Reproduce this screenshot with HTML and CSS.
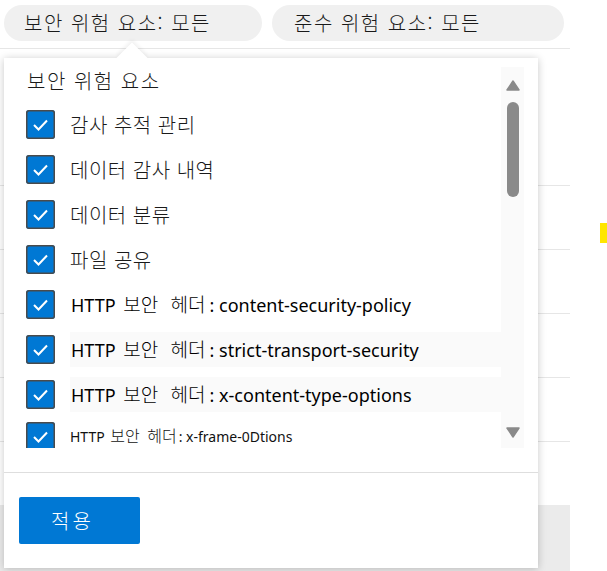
FILE: index.html
```html
<!DOCTYPE html>
<html lang="ko">
<head>
<meta charset="utf-8">
<title>보안 위험 요소</title>
<link rel="stylesheet" href="styles.css">
</head>
<body>
<div class="page">
  <div class="filters">
    <div class="pill">보안 위험 요소: 모든</div>
    <div class="pill pill-wide">준수 위험 요소: 모든</div>
  </div>
  <div class="table">
    <div class="trow trow-first"></div>
    <div class="trow"></div>
    <div class="trow"></div>
    <div class="trow"></div>
    <div class="trow"></div>
    <div class="trow trow-last"></div>
  </div>
  <div class="grey-band"></div>

  <div class="dropdown">
    <div class="caret"></div>
    <div class="body">
      <div class="list">
        <div class="title">보안 위험 요소</div>
        <label class="item"><span class="cb"><svg viewBox="0 0 29 29" width="29" height="29"><polyline points="8,15 12.5,19.5 21,10.5" fill="none" stroke="#fff" stroke-width="2"/></svg></span><span class="lbl">감사 추적 관리</span></label>
        <label class="item"><span class="cb"><svg viewBox="0 0 29 29" width="29" height="29"><polyline points="8,15 12.5,19.5 21,10.5" fill="none" stroke="#fff" stroke-width="2"/></svg></span><span class="lbl">데이터 감사 내역</span></label>
        <label class="item"><span class="cb"><svg viewBox="0 0 29 29" width="29" height="29"><polyline points="8,15 12.5,19.5 21,10.5" fill="none" stroke="#fff" stroke-width="2"/></svg></span><span class="lbl">데이터 분류</span></label>
        <label class="item"><span class="cb"><svg viewBox="0 0 29 29" width="29" height="29"><polyline points="8,15 12.5,19.5 21,10.5" fill="none" stroke="#fff" stroke-width="2"/></svg></span><span class="lbl">파일 공유</span></label>
        <label class="item"><span class="cb"><svg viewBox="0 0 29 29" width="29" height="29"><polyline points="8,15 12.5,19.5 21,10.5" fill="none" stroke="#fff" stroke-width="2"/></svg></span><span class="lbl lbl-http">HTTP <span class="ko">보안 헤더</span>: content-security-policy</span></label>
        <label class="item"><span class="cb"><svg viewBox="0 0 29 29" width="29" height="29"><polyline points="8,15 12.5,19.5 21,10.5" fill="none" stroke="#fff" stroke-width="2"/></svg></span><span class="lbl lbl-http lbl-shade">HTTP <span class="ko">보안 헤더</span>: strict-transport-security</span></label>
        <label class="item"><span class="cb"><svg viewBox="0 0 29 29" width="29" height="29"><polyline points="8,15 12.5,19.5 21,10.5" fill="none" stroke="#fff" stroke-width="2"/></svg></span><span class="lbl lbl-http lbl-shade">HTTP <span class="ko">보안 헤더</span>: x-content-type-options</span></label>
        <label class="item item-last"><span class="cb"><svg viewBox="0 0 29 29" width="29" height="29"><polyline points="8,15 12.5,19.5 21,10.5" fill="none" stroke="#fff" stroke-width="2"/></svg></span><span class="lbl lbl-small">HTTP <span class="ko-small">보안 헤더</span>: x-frame-0Dtions</span></label>
      </div>
      <div class="scrollbar">
        <svg class="arrow" viewBox="0 0 14 11" width="14" height="11"><path d="M7 1 L13 10 L1 10 Z" fill="#8a8a8a" stroke="#8a8a8a" stroke-linejoin="round" stroke-width="1.5"/></svg>
        <div class="thumb"></div>
        <div class="spacer"></div>
        <svg class="arrow" viewBox="0 0 14 11" width="14" height="11"><path d="M1 1 L13 1 L7 10 Z" fill="#8a8a8a" stroke="#8a8a8a" stroke-linejoin="round" stroke-width="1.5"/></svg>
      </div>
    </div>
    <div class="footer">
      <button class="apply">적용</button>
    </div>
  </div>
  <div class="marker"></div>
</div>
</body>
</html>
```
FILE: styles.css
```css
html, body {
  margin: 0;
  padding: 0;
  background: #fff;
}
body {
  font-family: "Noto Sans CJK KR", "Noto Sans", sans-serif;
  color: #222;
  width: 607px;
  height: 571px;
  overflow: hidden;
}
.page {
  position: relative;
  width: 570px;
  height: 571px;
}
.filters {
  display: flex;
  gap: 10px;
  padding: 5px 0 0 4px;
  height: 44px;
  box-sizing: border-box;
}
.pill {
  height: 36px;
  width: 258px;
  border-radius: 18px;
  background: #f0f0f0;
  font-size: 20px;
  font-weight: 300;
  letter-spacing: 1.5px;
  line-height: 36px;
  padding-left: 20px;
  box-sizing: border-box;
  color: #1a1a1a;
}
.pill-wide {
  width: 292px;
  padding-left: 22px;
}
.table {
  border-top: 1px solid #e6e6e6;
  margin-top: 4px;
}
.trow {
  height: 63px;
  border-bottom: 1px solid #e6e6e6;
}
.trow-first {
  height: 136px;
}
.trow-last {
  height: 63px;
  border-bottom: none;
}
.grey-band {
  background: #ebebeb;
  height: 80px;
}
.dropdown {
  position: absolute;
  left: 4px;
  top: 58px;
  width: 534px;
  height: 510px;
  background: #fff;
  box-shadow: 0 1px 8px rgba(0,0,0,0.22);
  display: flex;
  flex-direction: column;
}
.caret {
  position: absolute;
  left: 117px;
  top: -11px;
  width: 22px;
  height: 22px;
  background: #fff;
  transform: rotate(45deg);
  box-shadow: -2px -2px 4px rgba(0,0,0,0.06);
}
.body {
  position: relative;
  display: flex;
  padding: 9px 14px 0 22px;
  height: 381px;
  box-sizing: content-box;
  border-bottom: 1px solid #dedede;
  padding-bottom: 24px;
  background: #fff;
}
.list {
  flex: 1;
  overflow: hidden;
  height: 381px;
}
.title {
  font-size: 20px;
  font-weight: 300;
  letter-spacing: 1.5px;
  height: 28px;
  line-height: 28px;
  padding: 0 0 0 1px;
  margin-bottom: 7px;
  color: #1a1a1a;
}
.item {
  display: flex;
  align-items: center;
  height: 45px;
  gap: 15px;
}
.item-last {
  height: 42px;
  align-items: flex-start;
  padding-top: 5px;
}
.cb {
  width: 29px;
  height: 29px;
  flex: none;
  border-radius: 3px;
  background: #0078d4;
  box-shadow: inset 0 0 0 1.5px #4a4a4a;
  display: block;
}
.cb svg {
  display: block;
}
.lbl {
  font-size: 20px;
  font-weight: 300;
  letter-spacing: 0.5px;
  color: #1a1a1a;
  line-height: 34px;
}
.lbl-http {
  font-family: "Noto Sans", "Noto Sans CJK KR", sans-serif;
  font-size: 18px;
  font-weight: 400;
  letter-spacing: 0;
  color: #000;
  flex: 1;
  padding-left: 1px;
}
.ko {
  font-family: "Noto Sans CJK KR", sans-serif;
  font-weight: 300;
  font-size: 19px;
  letter-spacing: 0;
  word-spacing: 7px;
  margin-left: 3px;
  margin-right: 4px;
}
.lbl-shade {
  background: #fafafa;
}
.lbl-small {
  font-family: "Noto Sans", "Noto Sans CJK KR", sans-serif;
  font-size: 14px;
  font-weight: 400;
  letter-spacing: 0;
  color: #111;
  line-height: 18px;
  margin-top: 5px;
}
.ko-small {
  font-family: "Noto Sans CJK KR", sans-serif;
  font-weight: 300;
  font-size: 16px;
  line-height: 16px;
  word-spacing: 3px;
  margin-left: 2px;
  margin-right: 2px;
}
.scrollbar {
  width: 23px;
  background: #fafafa;
  display: flex;
  flex-direction: column;
  align-items: center;
  padding-top: 13px;
  padding-bottom: 10px;
  box-sizing: border-box;
  height: 381px;
}
.arrow {
  display: block;
  flex: none;
}
.thumb {
  width: 12px;
  height: 95px;
  border-radius: 6px;
  background: #8a8a8a;
  margin-top: 11px;
}
.spacer {
  flex: 1;
}
.footer {
  padding: 24px 0 0 15px;
}
.apply {
  width: 121px;
  height: 47px;
  border: none;
  border-radius: 2px;
  background: #0078d4;
  color: #fff;
  font-family: "Noto Sans CJK KR", sans-serif;
  font-size: 20px;
  font-weight: 300;
  letter-spacing: 3px;
  padding: 0 14px 0 0;
}
.marker {
  position: absolute;
  left: 600px;
  top: 223px;
  width: 7px;
  height: 20px;
  background: #ffe600;
}
```
